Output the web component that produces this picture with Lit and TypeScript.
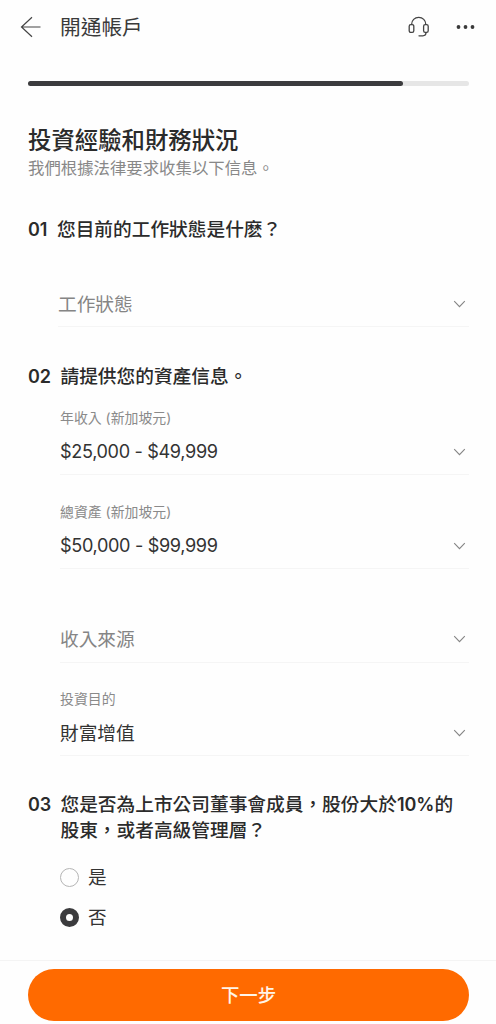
import { LitElement, html, css } from "lit";
import { customElement, property, state } from "lit/decorators.js";

@customElement("select-field")
class SelectField extends LitElement {
  @property() label = "";
  @property() value = "";
  @property() placeholder = "";

  static styles = css`
    :host { display: block; }
    .field {
      box-sizing: border-box;
      height: 93.7px;
      display: flex;
      flex-direction: column;
      justify-content: flex-end;
      border-bottom: 1.5px solid #f5f5f5;
    }
    .label {
      font-size: 13.9px;
      line-height: 20px;
      color: #8a8a8a;
      margin-bottom: 9px;
      white-space: nowrap;
    }
    .row {
      display: flex;
      align-items: center;
      justify-content: space-between;
      height: 28px;
      margin-bottom: 9px;
      font-size: 18.7px;
      line-height: 28px;
      color: #333;
      white-space: nowrap;
    }
    .text { padding-top: 3px; }
    .amount {
      font-size: 18.1px;
      letter-spacing: -0.34px;
      word-spacing: 0;
    }
    .empty { color: #858585; }
    svg { margin-right: 3px; margin-top: 1px; }
  `;

  render() {
    const amount = this.value.startsWith("$");
    return html`<div class="field">
      ${this.label ? html`<div class="label">${this.label}</div>` : ""}
      <div class="row ${this.value ? "" : "empty"}">
        <span class=${amount ? "amount" : "text"}>${this.value || this.placeholder}</span>
        <svg width="13" height="8" viewBox="0 0 13 8" fill="none" stroke="#858585" stroke-width="1.1">
          <path d="M1.2 1.2 6.5 6.6 11.8 1.2" />
        </svg>
      </div>
    </div>`;
  }
}

@customElement("app-root")
class AppRoot extends LitElement {
  @state() private director = "否";

  static styles = css`
    :host {
      display: block;
      font-family: "Inter", "Noto Sans CJK TC", sans-serif;
      color: #2b2b2b;
      background: #fff;
    }
    .page {
      height: 1024px;
      display: flex;
      flex-direction: column;
      overflow: hidden;
      background: #fefefe;
    }
    header {
      height: 54px;
      display: flex;
      align-items: center;
      padding: 0 20px;
    }
    .bar-title {
      flex: 1;
      margin-left: 18px;
      padding-top: 2px;
      font-size: 20.7px;
      line-height: 30px;
      color: #3a3a3a;
    }
    .more { margin-left: 26px; }
    .progress {
      margin: 27px 27px 0 28px;
      height: 5px;
      border-radius: 3px;
      background: #e6e6e6;
      flex: none;
    }
    .done {
      height: 5px;
      border-radius: 3px;
      background: #3c3c3e;
    }
    main { flex: 1; padding: 0 27px 0 28px; }
    h1 {
      margin: 38px 0 0;
      font-size: 23.4px;
      line-height: 34px;
      font-weight: 500;
    }
    .sub {
      margin-top: -2px;
      font-size: 16.4px;
      line-height: 24px;
      color: #888;
    }
    .question {
      display: grid;
      grid-template-columns: 32.5px 1fr;
      font-size: 18.7px;
      line-height: 25.5px;
      font-weight: 500;
    }
    .question.first { grid-template-columns: 29px 1fr; margin-top: 37px; }
    .question.second { margin-top: 37px; }
    .question.third { margin-top: 36px; }
    .num { font-weight: 600; font-size: 18px; }
    .pct { font-weight: 600; font-size: 18px; }
    .fields { margin: 0 0 0 32px; }
    .fields.first { margin: -9px 0 0 30px; }
    .fields.second { margin-top: -8px; }
    .radios {
      margin: 20px 0 0 32px;
      display: flex;
      flex-direction: column;
      gap: 12px;
    }
    .option {
      display: flex;
      align-items: center;
      gap: 9px;
      height: 28px;
      font-size: 18.6px;
      line-height: 28px;
      color: #333;
    }
    .dot {
      box-sizing: border-box;
      width: 19px;
      height: 19px;
      border-radius: 50%;
      border: 1px solid #b5b5b5;
    }
    .dot.on { border: 6px solid #3b3b3d; }
    footer {
      box-sizing: border-box;
      height: 64px;
      flex: none;
      border-top: 1px solid #f4f4f4;
      padding: 8px 27px 0 28px;
    }
    button {
      display: block;
      width: 100%;
      height: 52px;
      padding: 0;
      border: 0;
      border-radius: 26px;
      background: #ff6a00;
      color: #fff4e8;
      font: 500 18.4px/52px "Inter", "Noto Sans CJK TC", sans-serif;
    }
  `;

  private option(name: string) {
    return html`<div class="option" @click=${() => (this.director = name)}>
      <span class="dot ${this.director === name ? "on" : ""}"></span>${name}
    </div>`;
  }

  render() {
    return html`<div class="page">
      <header>
        <svg width="22" height="22" viewBox="0 0 22 22" fill="none" stroke="#444" stroke-width="1.2">
          <path d="M20.5 11H1.5M12 1.2 1.5 11 12 20.8" />
        </svg>
        <div class="bar-title">開通帳戶</div>
        <svg width="22" height="22" viewBox="0 0 22 22" fill="none" stroke="#444" stroke-width="1.3" stroke-linecap="round">
          <rect x="1.2" y="8.6" width="4.6" height="7.8" rx="1.6" />
          <rect x="15.6" y="8.6" width="4.6" height="7.8" rx="1.6" />
          <path d="M3.6 8.4C3.6 4.3 6.7 1.4 10.7 1.4S17.8 4.3 17.8 8.4M18 16.6C18 18.8 16.8 19.8 14.8 19.8H11" />
        </svg>
        <svg class="more" width="20" height="6" viewBox="0 0 20 6" fill="#3a3a3a">
          <circle cx="2.5" cy="3" r="1.9" /><circle cx="9.5" cy="3" r="1.9" /><circle cx="16.5" cy="3" r="1.9" />
        </svg>
      </header>
      <div class="progress"><div class="done" style="width:85%"></div></div>
      <main>
        <h1>投資經驗和財務狀況</h1>
        <div class="sub">我們根據法律要求收集以下信息。</div>

        <div class="question first"><span class="num">01</span><span>您目前的工作狀態是什麽？</span></div>
        <div class="fields first">
          <select-field placeholder="工作狀態"></select-field>
        </div>

        <div class="question second"><span class="num">02</span><span>請提供您的資產信息。</span></div>
        <div class="fields second">
          <select-field label="年收入 (新加坡元)" value="$25,000 - $49,999"></select-field>
          <select-field label="總資產 (新加坡元)" value="$50,000 - $99,999"></select-field>
          <select-field placeholder="收入來源"></select-field>
          <select-field label="投資目的" value="財富增值"></select-field>
        </div>

        <div class="question third">
          <span class="num">03</span>
          <span>您是否為上市公司董事會成員，股份大於<span class="pct">10%</span>的<br />股東，或者高級管理層？</span>
        </div>
        <div class="radios">${this.option("是")}${this.option("否")}</div>
      </main>
      <footer><button>下一步</button></footer>
    </div>`;
  }
}
